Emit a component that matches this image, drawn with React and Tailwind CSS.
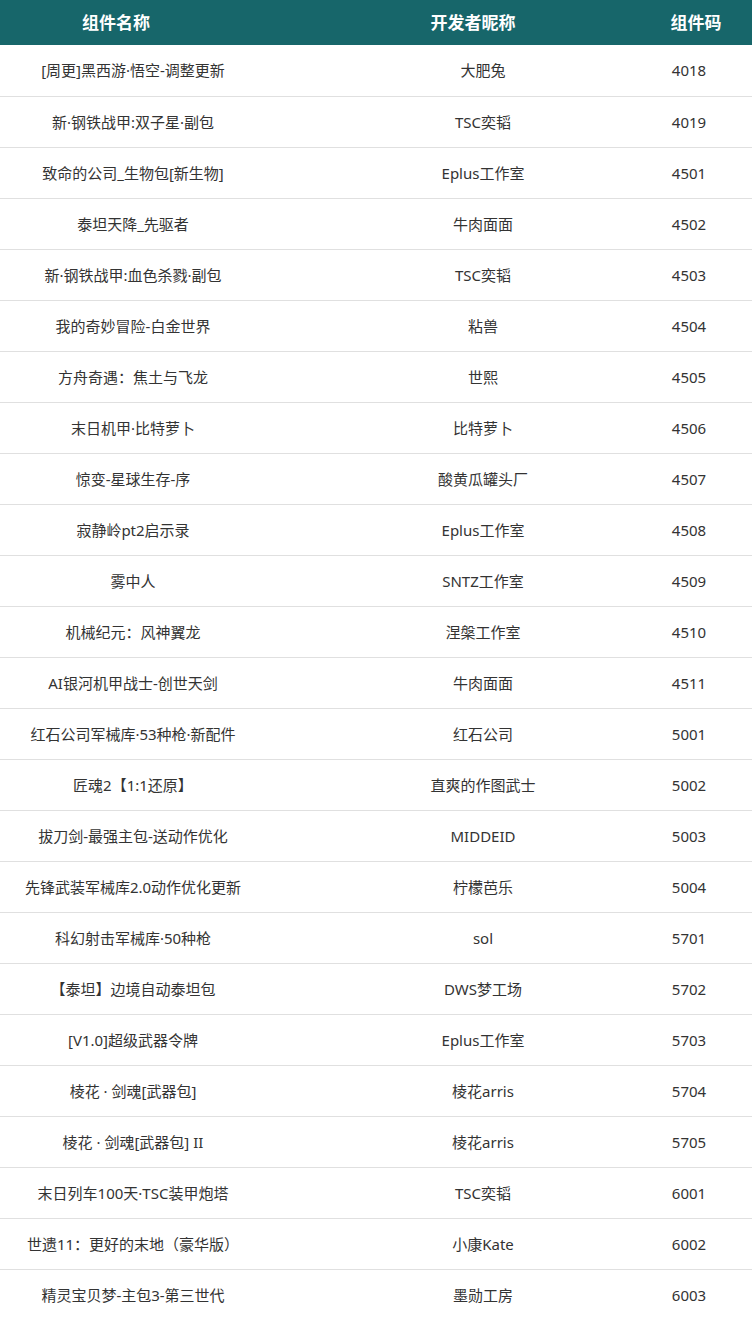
import React from 'react';

const rows = [
  ['[周更]黑西游·悟空-调整更新', '大肥兔', '4018'],
  ['新·钢铁战甲:双子星·副包', 'TSC奕韬', '4019'],
  ['致命的公司_生物包[新生物]', 'Eplus工作室', '4501'],
  ['泰坦天降_先驱者', '牛肉面面', '4502'],
  ['新·钢铁战甲:血色杀戮·副包', 'TSC奕韬', '4503'],
  ['我的奇妙冒险-白金世界', '粘兽', '4504'],
  ['方舟奇遇：焦土与飞龙', '世熙', '4505'],
  ['末日机甲·比特萝卜', '比特萝卜', '4506'],
  ['惊变-星球生存-序', '酸黄瓜罐头厂', '4507'],
  ['寂静岭pt2启示录', 'Eplus工作室', '4508'],
  ['雾中人', 'SNTZ工作室', '4509'],
  ['机械纪元：风神翼龙', '涅槃工作室', '4510'],
  ['AI银河机甲战士-创世天剑', '牛肉面面', '4511'],
  ['红石公司军械库·53种枪·新配件', '红石公司', '5001'],
  ['匠魂2【1:1还原】', '直爽的作图武士', '5002'],
  ['拔刀剑-最强主包-送动作优化', 'MIDDEID', '5003'],
  ['先锋武装军械库2.0动作优化更新', '柠檬芭乐', '5004'],
  ['科幻射击军械库·50种枪', 'sol', '5701'],
  ['【泰坦】边境自动泰坦包', 'DWS梦工场', '5702'],
  ['[V1.0]超级武器令牌', 'Eplus工作室', '5703'],
  ['棱花 · 剑魂[武器包]', '棱花arris', '5704'],
  ['棱花 · 剑魂[武器包] II', '棱花arris', '5705'],
  ['末日列车100天·TSC装甲炮塔', 'TSC奕韬', '6001'],
  ['世遗11：更好的末地（豪华版）', '小康Kate', '6002'],
  ['精灵宝贝梦-主包3-第三世代', '墨勋工房', '6003'],
];

const App = () => {
  return (
    <div className="w-[752px] bg-white font-['Noto_Sans','Noto_Sans_CJK_SC',sans-serif]">
      {/* header */}
      <div className="grid grid-cols-[232px_408px_112px] h-[45px] items-center bg-[#17666a] text-white text-[17px] font-bold">
        <div className="text-center">组件名称</div>
        <div className="text-center pl-[74px]">开发者昵称</div>
        <div className="text-center">组件码</div>
      </div>

      {/* body */}
      {rows.map((r, i) => (
        <div
          key={i}
          className={`grid grid-cols-[266px_360px_126px] items-center text-[15px] text-[#333] ${
            i === 0 ? 'h-[52px]' : 'h-[51px]'
          } ${i < rows.length - 1 ? 'border-b border-[#e0e0e0]' : ''}`}
        >
          <div className="text-center whitespace-nowrap">{r[0]}</div>
          <div className="text-center pl-[74px] whitespace-nowrap">{r[1]}</div>
          <div className="text-center">{r[2]}</div>
        </div>
      ))}
    </div>
  );
};

export default App;
